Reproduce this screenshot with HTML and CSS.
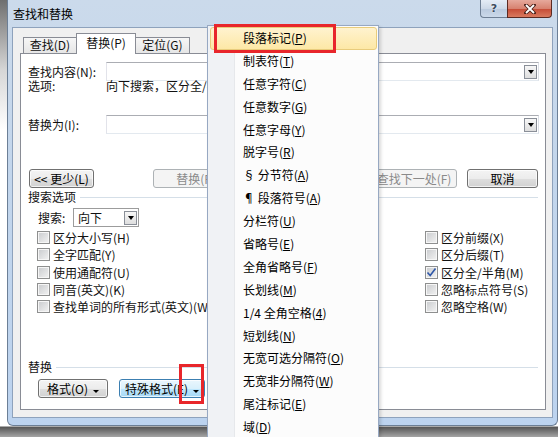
FILE: index.html
```html
<!DOCTYPE html>
<html lang="zh-CN">
<head>
  <meta charset="UTF-8" />
  <meta name="viewport" content="width=device-width, initial-scale=1.0" />
  <title>查找和替换</title>
  <link rel="stylesheet" href="styles.css">
</head>
<body>
  <div class="window">
    <div class="titlebar">
      <span class="title">查找和替换</span>
      <div class="caption-btns">
        <span class="cap-help">?</span>
        <span class="cap-close">
          <svg width="12" height="10" viewBox="0 0 12 10">
            <path d="M2 1 L10 9 M10 1 L2 9" stroke="#4a2019" stroke-width="3.6" stroke-linecap="square" />
            <path d="M2 1 L10 9 M10 1 L2 9" stroke="#fff" stroke-width="1.8" />
          </svg>
        </span>
      </div>
    </div>

    <div class="client">
      <div class="tabs">
        <div class="tab tab-find">查找(D)</div>
        <div class="tab tab-replace active">替换(P)</div>
        <div class="tab tab-goto">定位(G)</div>
      </div>

      <div class="panel">
        <div class="field-row find-row">
          <span class="field-label">查找内容(N):</span>
          <div class="combo"><span class="combo-arrow"></span></div>
        </div>
        <div class="field-row opts-row">
          <span class="field-label">选项:</span>
          <span class="opts-value">向下搜索，区分全/半角</span>
        </div>
        <div class="field-row repl-row">
          <span class="field-label">替换为(I):</span>
          <div class="combo"><span class="combo-arrow"></span></div>
        </div>

        <div class="btn-row top-btns">
          <button class="btn btn-less">&lt;&lt; 更少(L)</button>
          <button class="btn btn-repl" disabled>替换(R)</button>
          <button class="btn btn-next" disabled>查找下一处(F)</button>
          <button class="btn btn-cancel">取消</button>
        </div>

        <div class="group-title search-title">搜索选项</div>
        <div class="search-row">
          <span class="search-label">搜索:</span>
          <div class="select">
            <span>向下</span>
            <span class="combo-arrow"></span>
          </div>
        </div>

        <div class="checks">
          <div class="check"><span class="box"></span>区分大小写(H)</div>
          <div class="check"><span class="box"></span>全字匹配(Y)</div>
          <div class="check"><span class="box"></span>使用通配符(U)</div>
          <div class="check"><span class="box"></span>同音(英文)(K)</div>
          <div class="check"><span class="box"></span>查找单词的所有形式(英文)(W)</div>
          <div class="check"><span class="box"></span>区分前缀(X)</div>
          <div class="check"><span class="box"></span>区分后缀(T)</div>
          <div class="check">
            <span class="box checked">
              <svg width="11" height="11" viewBox="0 0 11 11"><path d="M1.5 5.5 L4.2 8.5 L9.5 1.5" fill="none" stroke="#2f57a8" stroke-width="1.6" /></svg>
            </span>区分全/半角(M)
          </div>
          <div class="check"><span class="box"></span>忽略标点符号(S)</div>
          <div class="check"><span class="box"></span>忽略空格(W)</div>
        </div>

        <div class="group-title replace-title">替换</div>
        <div class="btn-row bottom-btns">
          <button class="btn btn-format">格式(O)<span class="caret"></span></button>
          <button class="btn btn-special hot">特殊格式(E)<span class="caret"></span></button>
        </div>
      </div>
    </div>
  </div>

  <div class="menu">
    <div class="menu-item hot">段落标记(<u>P</u>)</div>
    <div class="menu-item">制表符(<u>T</u>)</div>
    <div class="menu-item">任意字符(<u>C</u>)</div>
    <div class="menu-item">任意数字(<u>G</u>)</div>
    <div class="menu-item">任意字母(<u>Y</u>)</div>
    <div class="menu-item">脱字号(<u>R</u>)</div>
    <div class="menu-item">§ 分节符(<u>A</u>)</div>
    <div class="menu-item">¶ 段落符号(<u>A</u>)</div>
    <div class="menu-item">分栏符(<u>U</u>)</div>
    <div class="menu-item">省略号(<u>E</u>)</div>
    <div class="menu-item">全角省略号(<u>F</u>)</div>
    <div class="menu-item">长划线(<u>M</u>)</div>
    <div class="menu-item">1/4 全角空格(<u>4</u>)</div>
    <div class="menu-item">短划线(<u>N</u>)</div>
    <div class="menu-item">无宽可选分隔符(<u>O</u>)</div>
    <div class="menu-item">无宽非分隔符(<u>W</u>)</div>
    <div class="menu-item">尾注标记(<u>E</u>)</div>
    <div class="menu-item">域(<u>D</u>)</div>
  </div>

  <div class="mark mark-menu"></div>
  <div class="mark mark-btn"></div>
</body>
</html>
```

FILE: styles.css
```css
* {
  box-sizing: border-box;
}
body {
  margin: 0;
  width: 558px;
  height: 437px;
  overflow: hidden;
  position: relative;
  font-family: "Noto Sans CJK SC", "DejaVu Sans", sans-serif;
  font-size: 12px;
  color: #111;
  background: linear-gradient(#6f6f6f 0, #d6d6d6 70px, #fff 130px, #fff 426px, #555 427px, #a5a5a5 437px);
}

/* window frame */
.window {
  margin-left: 7px;
  width: 551px;
  height: 426px;
  border: 1px solid #6c7f96;
  border-top: none;
  border-radius: 0 0 6px 6px;
  padding: 0 4px 7px;
  background: linear-gradient(#cbdaeb 0, #c3d6ec 40%, #bcd3ef 100%);
  display: flex;
  flex-direction: column;
}
.titlebar {
  height: 27px;
  flex: none;
  display: flex;
  align-items: flex-start;
  justify-content: space-between;
}
.title {
  padding-left: 1px;
  line-height: 27px;
  color: #000;
}
.caption-btns {
  display: flex;
  margin-right: 1px;
}
.cap-help, .cap-close {
  height: 18px;
  display: flex;
  align-items: center;
  justify-content: center;
  border: 1px solid #6e7f95;
  border-top: none;
}
.cap-help {
  width: 27px;
  border-right: none;
  border-radius: 0 0 0 4px;
  background: linear-gradient(#e4ecf6, #cdd9e8 50%, #b9c9de 51%, #cbd9ea);
  color: #3b4a5e;
  font-family: "DejaVu Sans", sans-serif;
  font-weight: bold;
  font-size: 11px;
  text-shadow: 0 0 2px #fff;
}
.cap-close {
  width: 45px;
  border-color: #5b2a22;
  border-radius: 0 0 4px 0;
  background: linear-gradient(#e6a99c, #d78270 50%, #c54a35 51%, #d97a5f);
}

.client {
  flex: 1;
  border: 1px solid #8ea2bc;
  background: #f0f0f0;
  padding: 5px 6px 7px 7px;
  display: flex;
  flex-direction: column;
}

/* tabs */
.tabs {
  height: 20px;
  flex: none;
  display: flex;
  align-items: flex-end;
  padding-left: 3px;
  position: relative;
  z-index: 1;
}
.tab {
  height: 16px;
  line-height: 14px;
  text-align: center;
  border: 1px solid #898c95;
  border-bottom: none;
  background: linear-gradient(#f6f6f6, #e6e6e6);
}
.tab-find { width: 53px; border-right: none; }
.tab-replace { width: 60px; }
.tab-goto { width: 54px; border-left: none; }
.tab.active {
  height: 21px;
  line-height: 18px;
  margin-bottom: -1px;
  background: #fff;
}

.panel {
  flex: 1;
  border: 1px solid #898c95;
  background: #fff;
  padding: 0 6px 0 7px;
}

/* find / replace fields */
.field-row {
  display: flex;
  align-items: center;
  height: 19px;
}
.field-label {
  width: 78px;
  flex: none;
}
.find-row { margin-top: 8px; }
.opts-row { height: 12px; line-height: 12px; margin-top: -1px; }
.opts-value { white-space: nowrap; }
.repl-row { margin-top: 23px; }
.combo {
  flex: 1;
  height: 19px;
  border: 1px solid;
  border-color: #abadb3 #dbdfe6 #e3e9ef #e2e3ea;
  background: #fff;
  display: flex;
  justify-content: flex-end;
  align-items: center;
  padding-right: 1px;
}
.combo-arrow {
  width: 13px;
  height: 14px;
  border: 1px solid #8a8f98;
  background: linear-gradient(#f7f7f7, #dedede);
  display: flex;
  align-items: center;
  justify-content: center;
}
.combo-arrow::after {
  content: "";
  border-left: 3px solid transparent;
  border-right: 3px solid transparent;
  border-top: 4px solid #000;
  margin-top: 1px;
}

/* buttons */
.btn-row {
  display: flex;
  height: 19px;
}
.top-btns { margin-top: 35px; }
.btn {
  height: 19px;
  padding: 0;
  font: inherit;
  color: #000;
  border: 1px solid #707070;
  border-radius: 3px;
  background: linear-gradient(#f4f4f4 0, #ececec 50%, #dedede 51%, #d2d2d2 100%);
  box-shadow: inset 0 0 0 1px rgba(255, 255, 255, 0.7);
  white-space: nowrap;
}
.btn:disabled {
  border-color: #adb2b5;
  background: #f4f4f4;
  color: #8a8a8a;
  box-shadow: none;
}
.btn.hot {
  border-color: #3c7fb1;
  background: linear-gradient(#eaf6fd 0, #d9f0fc 50%, #bee6fd 51%, #a7d9f5 100%);
}
.btn-less { margin-left: 1px; width: 65px; }
.btn-repl { margin-left: 59px; width: 86px; }
.btn-next { margin-left: 132px; width: 86px; }
.btn-cancel { margin-left: 10px; width: 71px; }
.caret {
  display: inline-block;
  margin-left: 5px;
  vertical-align: middle;
  border-left: 3px solid transparent;
  border-right: 3px solid transparent;
  border-top: 3px solid #000;
}

/* groups */
.group-title {
  display: flex;
  align-items: center;
  height: 14px;
  line-height: 14px;
}
.group-title::after {
  content: "";
  flex: 1;
  height: 1px;
  margin: 0 1px 0 4px;
  background: #d5dfe8;
}
.search-title { margin-top: 2px; }
.replace-title { margin-top: 45px; }

.search-row {
  margin-top: 4px;
  height: 19px;
  display: flex;
  align-items: center;
  padding-left: 10px;
}
.search-label { width: 35px; }
.select {
  width: 66px;
  height: 19px;
  border: 1px solid #9c9c9c;
  display: flex;
  align-items: center;
  justify-content: space-between;
  padding: 0 1px 0 4px;
}

.checks {
  margin-top: 2px;
  padding-left: 9px;
  display: grid;
  grid-template-columns: 388px 1fr;
  grid-template-rows: repeat(5, 17.3px);
  grid-auto-flow: column;
}
.check {
  display: flex;
  align-items: center;
  white-space: nowrap;
}
.box {
  width: 13px;
  height: 13px;
  margin-right: 3px;
  border: 1px solid #8e8f8f;
  background: linear-gradient(135deg, #c8cacd, #f3f3f3);
  box-shadow: inset 0 0 0 1px #f6f6f6;
  display: flex;
  align-items: center;
  justify-content: center;
}

.bottom-btns { margin-top: 5px; }
.btn-format { margin-left: 10px; width: 70px; }
.btn-special { margin-left: 11px; width: 86px; }

/* special format menu */
.menu {
  position: absolute;
  left: 207px;
  top: 25px;
  width: 172px;
  height: 430px;
  padding-top: 1px;
  border: 1px solid #97a8c2;
  background: linear-gradient(to right, #f0f2f5 0, #f0f2f5 26px, #e6e8eb 26px, #e6e8eb 27px, #fcfcfc 27px);
  box-shadow: 2px 2px 3px rgba(0, 0, 0, 0.15);
  z-index: 2;
}
.menu-item {
  height: 22.9px;
  line-height: 20.9px;
  margin: 0 1px 0 2px;
  padding-left: 32px;
  border: 1px solid transparent;
  border-radius: 3px;
  color: #000;
  white-space: nowrap;
}
.menu-item u {
  text-underline-offset: 1px;
}
.menu-item.hot {
  border-color: #e8cc7c;
  background: linear-gradient(#fff3cf, #fde8a6);
}

.mark {
  position: absolute;
  border: 3px solid #e8262b;
  z-index: 3;
}
.mark-menu {
  left: 214px;
  top: 24px;
  width: 122px;
  height: 29px;
}
.mark-btn {
  left: 179px;
  top: 364px;
  width: 25px;
  height: 40px;
}
```
